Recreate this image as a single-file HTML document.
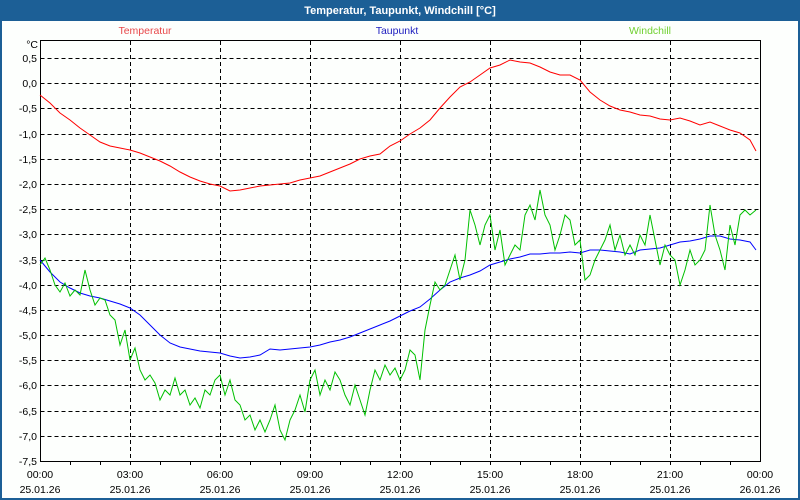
<!DOCTYPE html>
<html><head><style>
body{margin:0;width:800px;height:500px;overflow:hidden;background:#fff;font-family:"Liberation Sans",Tahoma,sans-serif}
</style></head><body>
<svg width="800" height="500" xmlns="http://www.w3.org/2000/svg" style="display:block" font-family="Liberation Sans, sans-serif" font-size="10.5">
<rect x="0" y="0" width="800" height="500" fill="#1c5f96"/>
<rect x="2" y="21" width="796" height="477" fill="#fdfffd"/>
<text x="400" y="14" text-anchor="middle" fill="#fff" font-weight="bold" font-size="11">Temperatur, Taupunkt, Windchill [°C]</text>
<text x="145" y="34" text-anchor="middle" fill="#e8484a">Temperatur</text>
<text x="397" y="34" text-anchor="middle" fill="#2020c0">Taupunkt</text>
<text x="650" y="34" text-anchor="middle" fill="#70d030">Windchill</text>
<g stroke="#000" stroke-dasharray="4,3" stroke-width="1">
<path d="M40.5 58.5H760M40.5 83.5H760M40.5 108.5H760M40.5 134.5H760M40.5 159.5H760M40.5 184.5H760M40.5 209.5H760M40.5 234.5H760M40.5 260.5H760M40.5 285.5H760M40.5 310.5H760M40.5 335.5H760M40.5 360.5H760M40.5 385.5H760M40.5 411.5H760M40.5 436.5H760"/>
<path d="M130.5 41V461M220.5 41V461M310.5 41V461M400.5 41V461M490.5 41V461M580.5 41V461M670.5 41V461"/>
</g>
<rect x="40.5" y="40.5" width="720" height="421" fill="none" stroke="#000"/>
<g stroke="#000"><path d="M70.5 461v4M100.5 461v4M130.5 461v4M160.5 461v4M190.5 461v4M220.5 461v4M250.5 461v4M280.5 461v4M310.5 461v4M340.5 461v4M370.5 461v4M400.5 461v4M430.5 461v4M460.5 461v4M490.5 461v4M520.5 461v4M550.5 461v4M580.5 461v4M610.5 461v4M640.5 461v4M670.5 461v4M700.5 461v4M730.5 461v4"/></g>
<g text-anchor="end" fill="#000">
<text x="38" y="48">°C</text>
<text x="37" y="62">0,5</text><text x="37" y="87">0,0</text><text x="37" y="112">-0,5</text><text x="37" y="138">-1,0</text><text x="37" y="163">-1,5</text><text x="37" y="188">-2,0</text><text x="37" y="213">-2,5</text><text x="37" y="238">-3,0</text><text x="37" y="264">-3,5</text><text x="37" y="289">-4,0</text><text x="37" y="314">-4,5</text><text x="37" y="339">-5,0</text><text x="37" y="364">-5,5</text><text x="37" y="389">-6,0</text><text x="37" y="415">-6,5</text><text x="37" y="440">-7,0</text><text x="37" y="465">-7,5</text>
</g>
<g text-anchor="middle" fill="#000">
<text x="40" y="478">00:00</text><text x="130" y="478">03:00</text><text x="220" y="478">06:00</text><text x="310" y="478">09:00</text><text x="400" y="478">12:00</text><text x="490" y="478">15:00</text><text x="580" y="478">18:00</text><text x="670" y="478">21:00</text><text x="760" y="478">00:00</text>
<text x="40" y="493">25.01.26</text><text x="130" y="493">25.01.26</text><text x="220" y="493">25.01.26</text><text x="310" y="493">25.01.26</text><text x="400" y="493">25.01.26</text><text x="490" y="493">25.01.26</text><text x="580" y="493">25.01.26</text><text x="670" y="493">25.01.26</text><text x="760" y="493">26.01.26</text>
</g>
<polyline fill="none" stroke="#ff0000" points="40,95 50,103 60,113 70,120 80,128 90,135 100,142 110,146 120,148 130,150 140,153 150,157 160,161 170,166 180,172 190,177 200,181 210,184 220,186 230,191 240,190 250,188 260,186 270,185 280,184 290,183 300,180 310,178 320,176 330,172 340,168 350,164 360,159 370,156 380,154 390,146 400,141 410,134 420,128 430,120 440,108 450,97 460,87 470,82 480,75 490,68 500,65 510,60 520,62 530,63 540,67 550,72 560,75 570,75 580,80 590,92 600,100 610,106 620,110 630,112 640,115 650,116 660,119 670,120 680,118 690,121 700,125 710,122 720,126 730,130 740,133 750,140 756,151"/>
<polyline fill="none" stroke="#0000ff" points="40,260 50,272 60,282 70,288 80,293 90,296 100,298 110,301 120,304 130,308 140,315 150,325 160,335 170,343 180,347 190,349 200,351 210,352 220,353 230,356 240,358 250,357 260,355 270,349 280,350 290,349 300,348 310,347 320,345 330,342 340,340 350,337 360,333 370,329 380,325 390,321 400,316 410,311 420,307 430,299 440,290 450,282 460,278 470,275 480,271 490,265 500,262 510,259 520,257 530,254 540,254 550,253 560,253 570,252 580,253 590,250 600,250 610,251 620,252 630,254 640,250 650,249 660,248 670,245 680,242 690,241 700,239 710,236 720,236 730,239 740,240 750,242 756,250"/>
<polyline fill="none" stroke="#00c000" points="40,265 45,258 50,270 55,285 60,292 65,283 70,296 75,290 80,295 85,270 90,290 95,305 100,298 105,300 110,315 115,320 120,345 125,330 130,360 135,348 140,370 145,380 150,375 155,383 160,400 165,390 170,395 175,378 180,395 185,390 190,405 195,398 200,408 205,390 210,395 215,380 220,375 225,395 230,380 235,400 240,405 245,420 250,415 255,430 260,420 265,432 270,420 275,405 280,430 285,440 290,420 295,410 300,395 305,412 310,380 315,370 320,395 325,380 330,390 335,372 340,380 345,395 350,405 355,385 360,400 365,415 370,390 375,370 380,380 385,365 390,375 395,368 400,380 405,370 410,350 415,355 420,380 425,330 430,305 435,282 440,290 445,285 450,270 455,255 460,280 465,260 470,210 475,225 480,245 485,225 490,215 495,250 500,230 505,265 510,255 515,245 520,250 525,215 530,205 535,220 540,190 545,215 550,225 555,250 560,235 565,215 570,220 575,245 580,240 585,280 590,275 595,260 600,250 605,240 610,225 615,250 620,235 625,255 630,245 635,255 640,235 645,245 650,215 655,240 660,265 665,245 670,255 675,260 680,285 685,270 690,250 695,265 700,260 705,250 710,205 715,235 720,250 725,270 730,225 735,245 740,215 745,210 750,215 756,210"/>
</svg>
</body></html>
